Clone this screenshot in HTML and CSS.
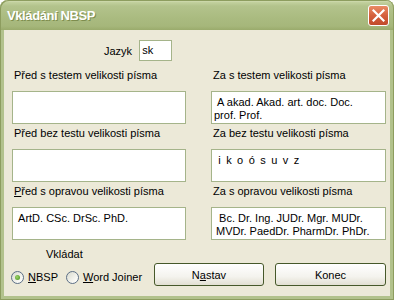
FILE: index.html
```html
<!DOCTYPE html>
<html lang="cs">
<head>
    <meta charset="UTF-8">
    <title>Vkládání NBSP</title>
    <link rel="stylesheet" href="styles.css">
</head>
<body>
    <div class="window">
        <!-- Title bar -->
        <div class="titlebar">
            <span class="title">Vkládání NBSP</span>
            <button class="close" aria-label="Zavřít">
                <svg width="13" height="13" viewBox="0 0 13 13">
                    <path d="M1.5 1.5 L11.5 11.5 M11.5 1.5 L1.5 11.5" stroke="#fff" stroke-width="2.2" stroke-linecap="square"/>
                </svg>
            </button>
        </div>

        <div class="client">
            <div class="lang-row">
                <label class="lang-label">Jazyk</label>
                <div class="edit lang">sk</div>
            </div>

            <div class="fields">
                <div class="field">
                    <div class="label">Před s testem velikosti písma</div>
                    <div class="edit box"></div>
                </div>
                <div class="field">
                    <div class="label">Za s testem velikosti písma</div>
                    <div class="edit box r1">&nbsp;A akad. Akad. art. doc. Doc.<br>prof. Prof.</div>
                </div>
                <div class="field">
                    <div class="label">Před bez testu velikosti písma</div>
                    <div class="edit box"></div>
                </div>
                <div class="field">
                    <div class="label">Za bez testu velikosti písma</div>
                    <div class="edit box r2">&nbsp;i k o ó s u v z</div>
                </div>
                <div class="field">
                    <div class="label"><u>P</u>řed s opravou velikosti písma</div>
                    <div class="edit box l3">&nbsp;ArtD. CSc. DrSc. PhD.</div>
                </div>
                <div class="field">
                    <div class="label">Za s opravou velikosti písma</div>
                    <div class="edit box r3">&nbsp;Bc. Dr. Ing. JUDr. Mgr. MUDr.<br>MVDr. PaedDr. PharmDr. PhDr.<br>PhMr. RNDr. RSDr. ThDr. ThLic.</div>
                </div>
            </div>

            <div class="bottom">
                <div class="insert">
                    <div class="insert-label">Vkládat</div>
                    <div class="radios">
                        <span class="radio">
                            <span class="dot checked"></span>
                            <span class="radio-text"><u>N</u>BSP</span>
                        </span>
                        <span class="radio">
                            <span class="dot"></span>
                            <span class="radio-text"><u>W</u>ord Joiner</span>
                        </span>
                    </div>
                </div>
                <button class="btn">N<u>a</u>stav</button>
                <button class="btn">Konec</button>
            </div>
        </div>
    </div>
</body>
</html>
```

FILE: styles.css
```css
* {
    margin: 0;
    padding: 0;
    box-sizing: border-box;
}

body {
    background: #fff;
    font-family: "Liberation Sans", Arial, sans-serif;
    font-size: 11px;
    color: #000;
}

/* Window frame, olive XP look */
.window {
    width: 394px;
    height: 300px;
    display: flex;
    flex-direction: column;
    border-radius: 8px 8px 0 0;
    background: #b2c28c;
    padding: 0 4px 4px;
    box-shadow: inset 1px 0 0 #8d9d5f, inset -1px 0 0 #8d9d5f, inset 0 -1px 0 #8d9d5f;
    overflow: hidden;
}

.titlebar {
    height: 30px;
    margin: 0 -4px;
    padding: 0 5px 0 7px;
    display: flex;
    align-items: center;
    justify-content: space-between;
    border-radius: 8px 8px 0 0;
    background: linear-gradient(to bottom, #e3eac7 0, #c3d19f 2px, #b3c38c 6px, #aabb80 18px, #a6b77b 26px, #9aab6c 30px);
    box-shadow: inset 1px 1px 0 #8d9d5f, inset -1px 0 0 #8d9d5f;
}

.title {
    color: #fff;
    font-weight: bold;
    font-size: 13px;
    letter-spacing: -0.4px;
    text-shadow: 1px 1px 0 #7d8d4e;
    padding-top: 1px;
}

.close {
    width: 21px;
    height: 21px;
    border: 1px solid #fff;
    border-radius: 3px;
    background: linear-gradient(to bottom, #e98c65, #d5603c 50%, #c14a2a);
    display: flex;
    align-items: center;
    justify-content: center;
    margin-top: 1px;
}

.client {
    flex: 1;
    background: #ece9d8;
}

.lang-row {
    display: flex;
    align-items: center;
    gap: 7px;
    padding: 10px 0 0 100px;
}

.edit {
    background: #fff;
    border: 1px solid #a5b48a;
    line-height: 13px;
    overflow: hidden;
    white-space: nowrap;
}

.lang {
    width: 33px;
    height: 21px;
    padding: 3px 2px;
}

.fields {
    display: grid;
    grid-template-columns: 174px 175px;
    column-gap: 25px;
    row-gap: 3px;
    margin: 8px 0 0 8px;
}

.label {
    line-height: 13px;
    margin-bottom: 9px;
    padding-left: 2px;
}

.box {
    height: 33px;
    padding: 4px 2px;
}

.r2 {
    letter-spacing: 1.2px;
}

.r3 {
    padding: 4px 4px 0;
}

.bottom {
    display: flex;
    align-items: flex-end;
    margin-top: 8px;
}

.insert {
    width: 150px;
    padding: 0 0 2px 7px;
}

.insert-label {
    line-height: 13px;
    padding-left: 35px;
}

.radios {
    display: flex;
    margin-top: 9px;
    height: 14px;
    align-items: center;
}

.radio {
    display: flex;
    align-items: center;
    gap: 4px;
    margin-right: 8px;
    white-space: nowrap;
}

.dot {
    flex: none;
    width: 13px;
    height: 13px;
    border-radius: 50%;
    border: 1px solid #5c6f86;
    background: linear-gradient(135deg, #d8dace, #f7f7f2 70%, #fff);
    display: flex;
    align-items: center;
    justify-content: center;
}

.dot.checked::after {
    content: '';
    width: 5px;
    height: 5px;
    border-radius: 50%;
    background: radial-gradient(circle at 40% 40%, #9fd36a, #3f8f18);
}

.btn {
    width: 110px;
    height: 23px;
    border: 1px solid #46582a;
    border-radius: 3px;
    background: linear-gradient(to bottom, #ffffff, #f4f3ee 60%, #e2dfd2);
    font-family: inherit;
    font-size: 11px;
    color: #000;
    margin-right: 11px;
}

.btn:last-child {
    width: 111px;
    margin-right: 0;
}
```
